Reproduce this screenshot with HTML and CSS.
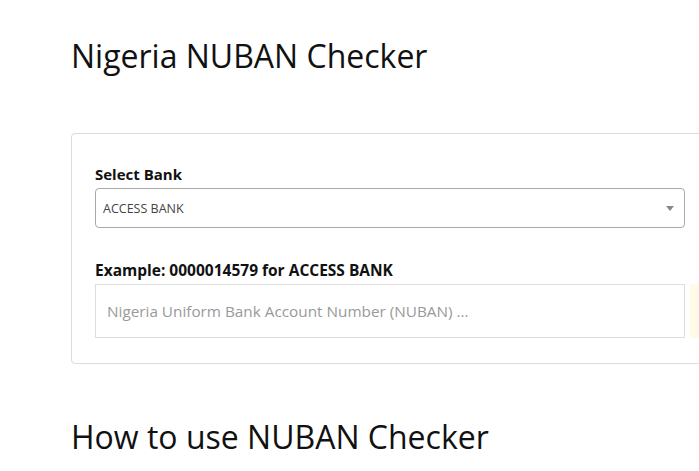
FILE: index.html
```html
<!DOCTYPE html>
<html lang="en">
<head>
    <meta charset="UTF-8">
    <meta name="viewport" content="width=device-width, initial-scale=1.0">
    <title>Nigeria NUBAN Checker</title>
    <link rel="stylesheet" href="styles.css">
</head>
<body>

    <div class="page">
        <h1 class="title">Nigeria NUBAN Checker</h1>

        <div class="card">
            <form id="nubanForm">
                <label for="bank">Select Bank</label>
                <div class="select-box" id="bank">
                    <span class="select-value">ACCESS BANK</span>
                    <span class="select-arrow"></span>
                </div>

                <label for="nuban" class="second-label">Example: 0000014579 for ACCESS BANK</label>
                <div class="input-group">
                    <input type="text" id="nuban" name="nuban" placeholder="Nigeria Uniform Bank Account Number (NUBAN) ...">
                    <button type="submit" class="check-btn"></button>
                </div>
            </form>
        </div>

        <h2 class="title how-to">How to use NUBAN Checker</h2>
    </div>

</body>
</html>
```

FILE: styles.css
```css
body {
    font-family: "Open Sans", "Noto Sans", sans-serif;
    background-color: #fff;
    color: #111;
    margin: 0;
    overflow: hidden;
}

.page {
    padding: 0 0 0 71px;
    width: 628px;
}

.title {
    font-size: 32px;
    font-weight: 400;
    margin: 37px 0 0;
    line-height: 1.2;
}

.card {
    margin-top: 58px;
    width: 680px;
    border: 1px solid #dcdcdc;
    border-radius: 4px;
    padding: 30px 23px 25px;
}

label {
    display: block;
    font-weight: 700;
    font-size: 15px;
    line-height: 20px;
    margin-bottom: 4px;
}

.second-label {
    margin-top: 32px;
    font-size: 15.5px;
}

.select-box {
    width: 590px;
    height: 40px;
    box-sizing: border-box;
    border: 1px solid #aaa;
    border-radius: 4px;
    display: flex;
    align-items: center;
    justify-content: space-between;
    padding: 0 7px;
}

.select-value {
    font-size: 12.5px;
    color: #444;
}

.select-arrow {
    width: 0;
    height: 0;
    border-left: 4px solid transparent;
    border-right: 4px solid transparent;
    border-top: 5px solid #888;
    margin-right: 3px;
}

.input-group {
    display: flex;
    gap: 5px;
}

input {
    width: 590px;
    height: 54px;
    box-sizing: border-box;
    padding: 0 11px;
    border: 1px solid #ddd;
    font-family: inherit;
    font-size: 15.3px;
}

input::placeholder {
    color: #999;
}

.check-btn {
    width: 60px;
    height: 54px;
    border: none;
    background-color: #fffbe8;
}

.how-to {
    margin-top: 54px;
}
```
